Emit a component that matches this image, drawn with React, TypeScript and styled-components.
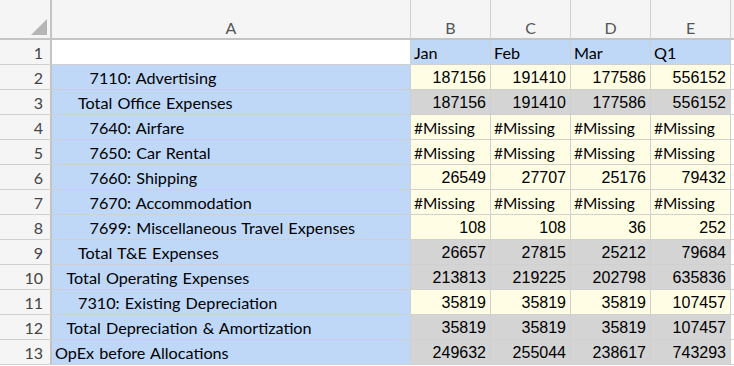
import React from "react";
import styled, { createGlobalStyle } from "styled-components";

const GlobalStyle = createGlobalStyle`
  html, body { margin: 0; padding: 0; background: #ffffff; }
  body { font-family: "Lato", "Liberation Sans", sans-serif; }
`;

type Kind = "member" | "data" | "total" | "blank" | "head";

const BLUE = "#bfd8f8";
const YELLOW = "#fffde3";
const GREY = "#d4d4d4";
const LINE = "#d0d0d0";
const HEAD_BG = "#f5f5f5";
const HEAD_LINE = "#c4c4c4";

const bgFor = (k: Kind) =>
  k === "member" || k === "head" ? BLUE : k === "data" ? YELLOW : k === "total" ? GREY : "#ffffff";

const Sheet = styled.div`
  display: grid;
  grid-template-columns: 52px 359px 80px 80px 80px 80px 1fr;
  grid-template-rows: 40px;
  grid-auto-rows: 25px;
  width: 734px;
  height: 366px;
  overflow: hidden;
`;

const Corner = styled.div`
  position: relative;
  background: ${HEAD_BG};
  border-right: 2px solid ${HEAD_LINE};
  border-bottom: 2px solid ${HEAD_LINE};
  box-sizing: border-box;
`;

const CornerTriangle = styled.svg`
  position: absolute;
  right: 3px;
  bottom: 3px;
`;

const ColHead = styled.div`
  background: ${HEAD_BG};
  border-right: 1px solid ${LINE};
  border-bottom: 2px solid ${HEAD_LINE};
  box-sizing: border-box;
  display: flex;
  align-items: flex-end;
  justify-content: center;
  padding-bottom: 1px;
  font-family: "Lato", sans-serif;
  font-size: 16px;
  line-height: 18px;
  color: #555555;
`;

const RowHead = styled.div`
  background: ${HEAD_BG};
  border-right: 2px solid ${HEAD_LINE};
  border-bottom: 1px solid ${LINE};
  box-sizing: border-box;
  display: flex;
  align-items: flex-end;
  justify-content: flex-end;
  padding: 0 7px 2px 0;
  font-family: "Lato", sans-serif;
  font-size: 16px;
  line-height: 18px;
  color: #444444;
`;

const Cell = styled.div<{ $kind: Kind; $indent?: number; $num?: boolean; $label?: boolean }>`
  background: ${(p) => bgFor(p.$kind)};
  border-right: 1px solid ${LINE};
  border-bottom: 1px solid ${LINE};
  box-sizing: border-box;
  display: flex;
  align-items: flex-end;
  justify-content: ${(p) => (p.$num ? "flex-end" : "flex-start")};
  padding: 0 4px 2px ${(p) => 3 + (p.$indent ?? 0) * 11.5}px;
  font-family: ${(p) => (p.$num ? '"Liberation Sans", Arial, sans-serif' : '"Lato", sans-serif')};
  font-size: ${(p) => (p.$num ? "16px" : p.$label ? "16.2px" : "15.5px")};
  word-spacing: ${(p) => (p.$label ? "1px" : "0")};
  line-height: 18px;
  color: #000000;
  white-space: nowrap;
  overflow: hidden;
`;

type Row = { label: string; indent: number; kind: "data" | "total"; values: (number | null)[] };

const rows: Row[] = [
  { label: "7110: Advertising", indent: 3, kind: "data", values: [187156, 191410, 177586, 556152] },
  { label: "Total Office Expenses", indent: 2, kind: "total", values: [187156, 191410, 177586, 556152] },
  { label: "7640: Airfare", indent: 3, kind: "data", values: [null, null, null, null] },
  { label: "7650: Car Rental", indent: 3, kind: "data", values: [null, null, null, null] },
  { label: "7660: Shipping", indent: 3, kind: "data", values: [26549, 27707, 25176, 79432] },
  { label: "7670: Accommodation", indent: 3, kind: "data", values: [null, null, null, null] },
  { label: "7699: Miscellaneous Travel Expenses", indent: 3, kind: "data", values: [108, 108, 36, 252] },
  { label: "Total T&E Expenses", indent: 2, kind: "total", values: [26657, 27815, 25212, 79684] },
  { label: "Total Operating Expenses", indent: 1, kind: "total", values: [213813, 219225, 202798, 635836] },
  { label: "7310: Existing Depreciation", indent: 2, kind: "data", values: [35819, 35819, 35819, 107457] },
  { label: "Total Depreciation & Amortization", indent: 1, kind: "total", values: [35819, 35819, 35819, 107457] },
  { label: "OpEx before Allocations", indent: 0, kind: "total", values: [249632, 255044, 238617, 743293] },
];

const columns = ["A", "B", "C", "D", "E", ""];
const periods = ["Jan", "Feb", "Mar", "Q1"];

export default function App() {
  return (
    <>
      <GlobalStyle />
      <Sheet>
        <Corner>
          <CornerTriangle width="16" height="16" viewBox="0 0 16 16">
            <polygon points="16,0 16,16 0,16" fill="#b5b5b5" />
          </CornerTriangle>
        </Corner>
        {columns.map((c, i) => (
          <ColHead key={i}>{c}</ColHead>
        ))}

        <RowHead>1</RowHead>
        <Cell $kind="blank" />
        {periods.map((p) => (
          <Cell key={p} $kind="head" $label>
            {p}
          </Cell>
        ))}
        <Cell $kind="blank" />

        {rows.map((r, i) => (
          <React.Fragment key={r.label}>
            <RowHead>{i + 2}</RowHead>
            <Cell $kind="member" $indent={r.indent} $label>
              {r.label}
            </Cell>
            {r.values.map((v, j) =>
              v === null ? (
                <Cell key={j} $kind={r.kind}>
                  #Missing
                </Cell>
              ) : (
                <Cell key={j} $kind={r.kind} $num>
                  {v}
                </Cell>
              )
            )}
            <Cell $kind="blank" />
          </React.Fragment>
        ))}
      </Sheet>
    </>
  );
}
